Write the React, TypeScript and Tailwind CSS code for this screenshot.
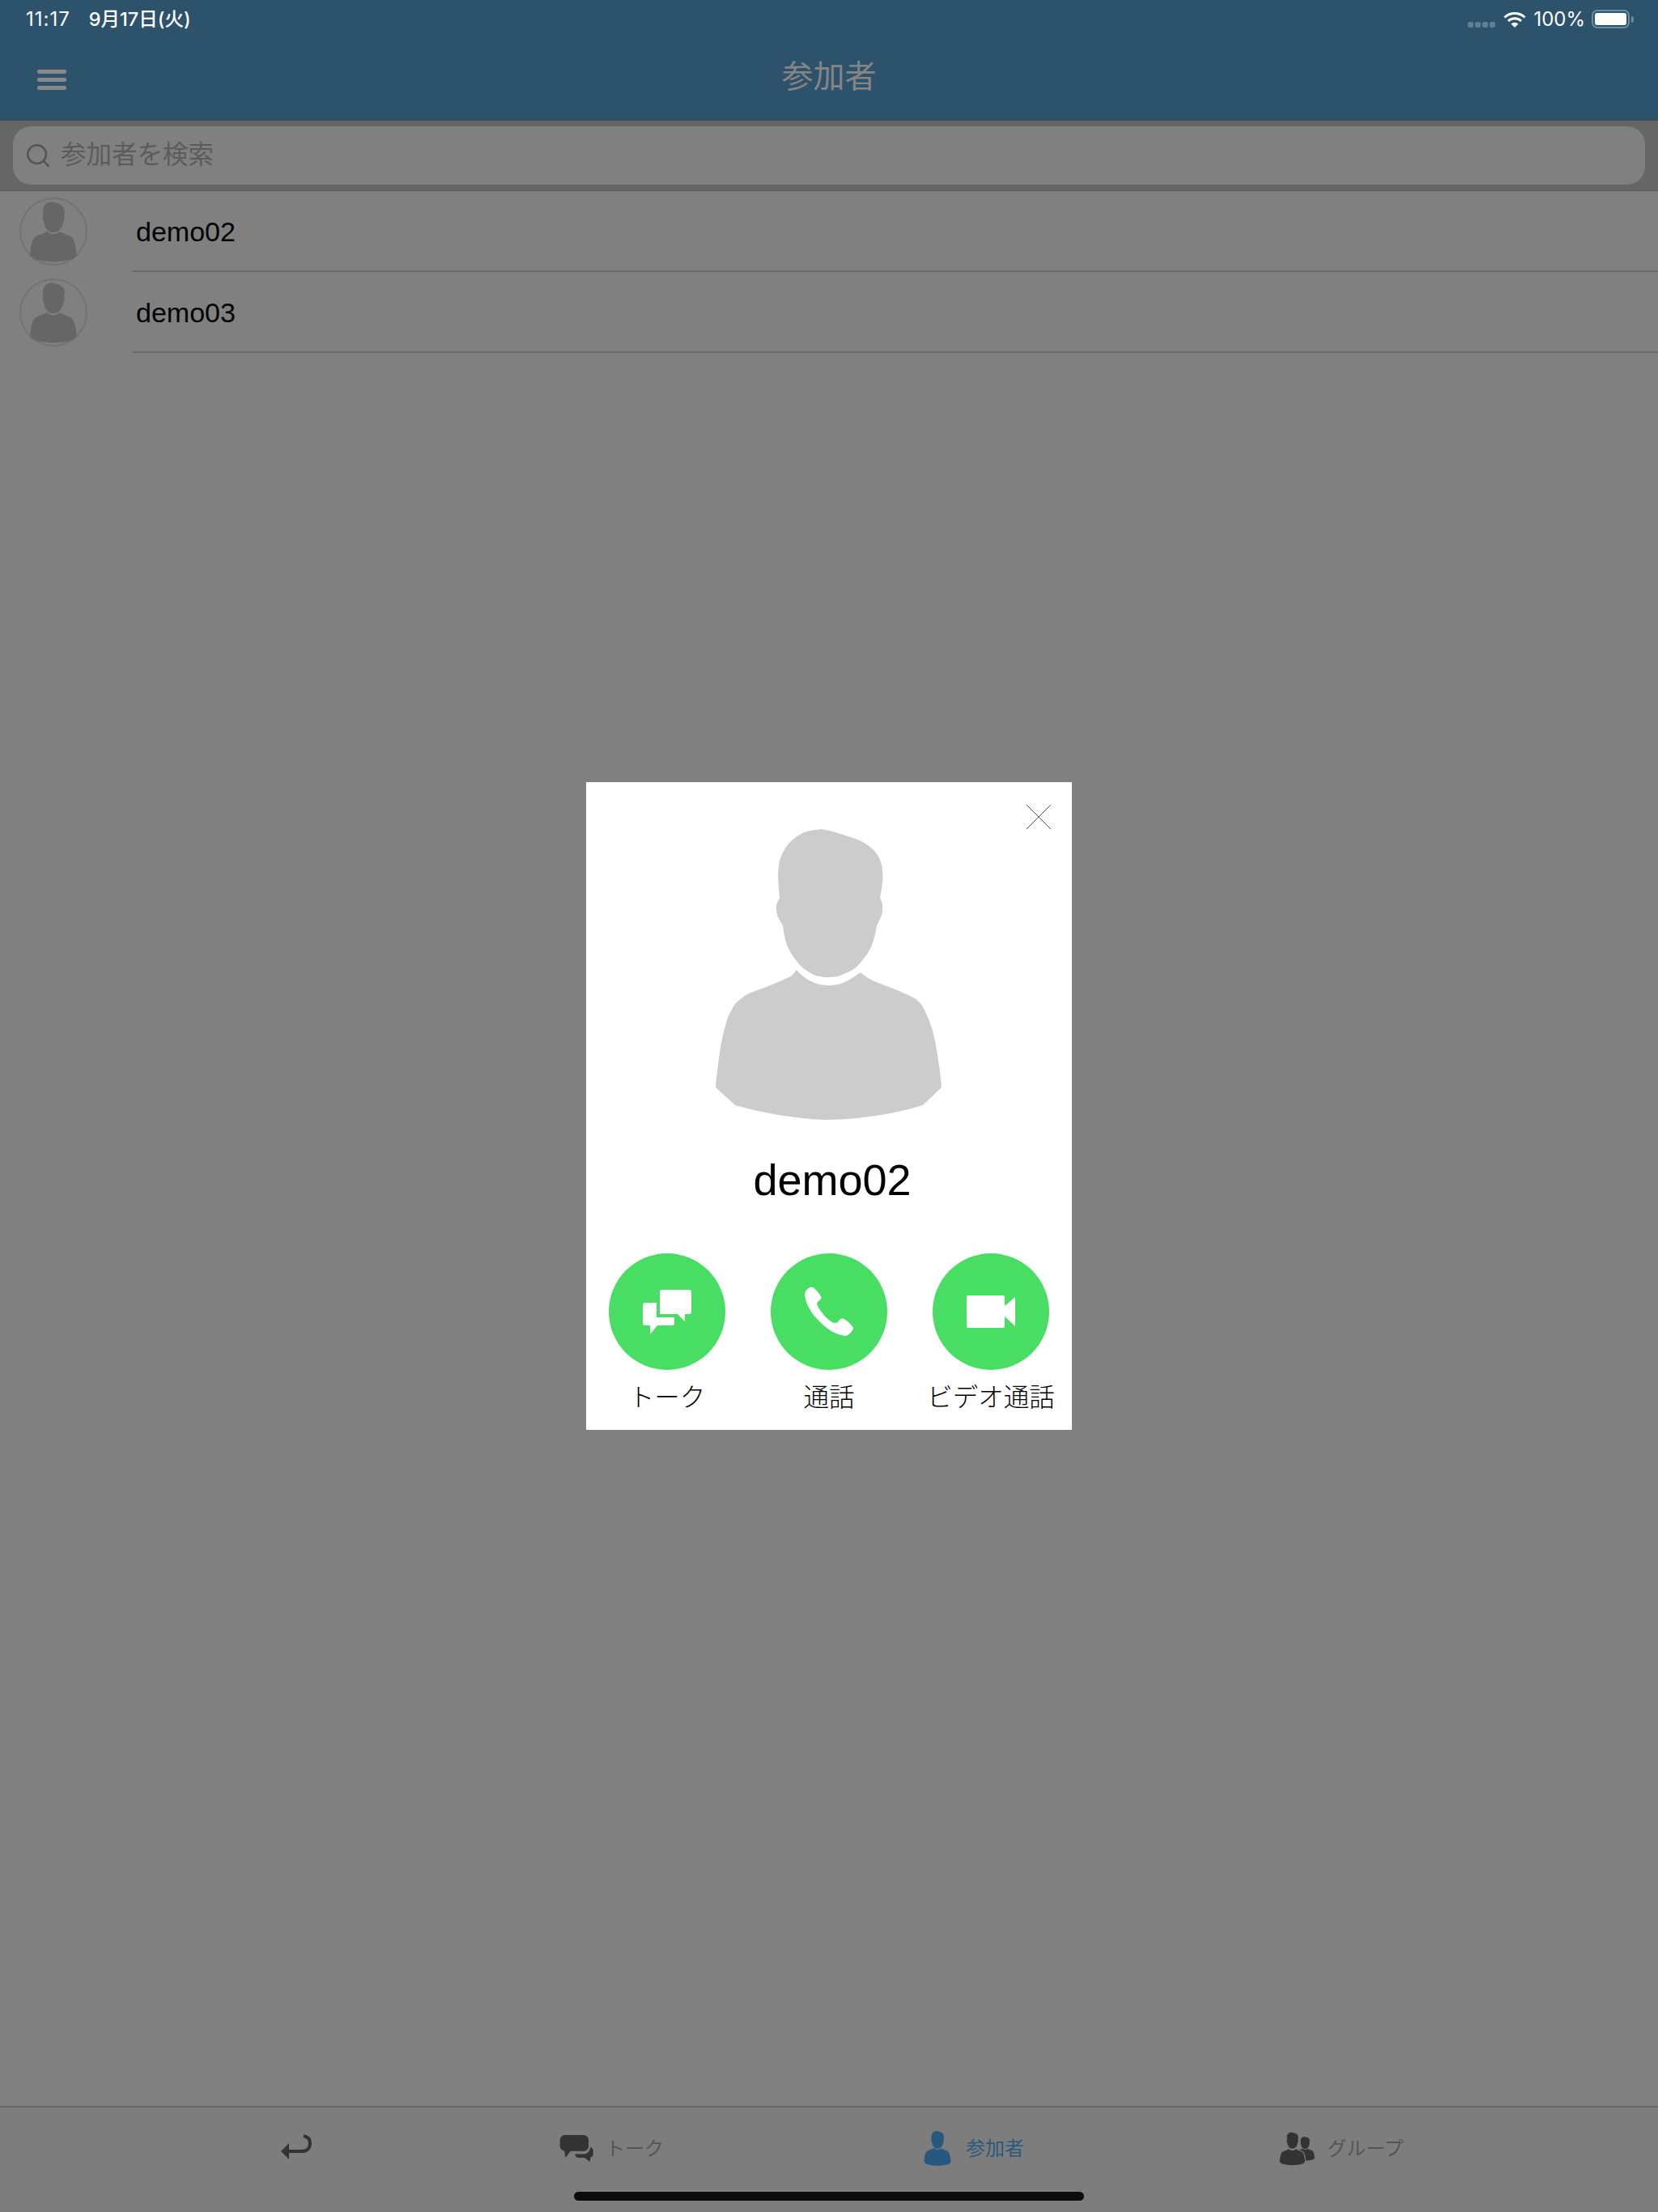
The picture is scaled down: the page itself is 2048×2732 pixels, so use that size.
import React from 'react';
import { Search } from 'lucide-react';

const FONT = "font-['Liberation_Sans','Noto_Sans_CJK_JP',sans-serif]";
const UI_FONT = "font-['Inter','Noto_Sans_CJK_JP',sans-serif]";

const PERSON_PATH =
    'M131 0 C145 2 157 7 170 11 C182 15 191 21 197 28 C203 36 206 44 206 53 C207 60 206 67 205 73 L203 86 C205 88 206 92 206 96 C206 101 206 105 204 109 L199 119 C198 127 196 135 193 143 C190 151 184 159 178 166 C172 173 166 176 158 179 C152 182 146 183 139 183 C132 183 125 182 119 179 C112 175 105 170 100 163 C95 157 91 150 88 143 C85 135 84 127 83 119 L77 109 C75 105 75 100 75 96 C75 92 77 88 79 86 L77 59 C77 52 78 45 79 39 C82 30 86 22 92 16 C99 9 107 4 116 2 Z M100 174 C106 181 113 186 120 189 C126 192 132 193 139 193 C146 193 153 192 159 189 C166 186 173 181 179 177 C186 183 193 187 201 190 C215 195 230 201 244 208 C248 210 252 214 255 218 C260 227 264 236 267 246 C271 259 273 272 275 286 C277 297 278 308 279 319 L256 341 C240 346 222 350 205 353 C183 356 161 359 139 359 C118 359 97 356 77 353 C59 350 41 346 24 341 L0 319 C1 305 3 290 5 276 C7 262 10 249 14 236 C16 229 20 222 24 216 C29 211 35 206 41 203 C55 198 70 192 84 186 C88 184 91 183 94 181 Z';

const Person: React.FC<{ className: string }> = ({ className }) => (
    <svg viewBox="0 0 280 360" className={className}>
        <path d={PERSON_PATH} fill="currentColor" />
    </svg>
);

const WifiIcon = () => (
    <svg viewBox="0 0 28 20" className="w-[28px] h-[20px] text-white">
        <path d="M1.5 7.5 A18 18 0 0 1 26.5 7.5" fill="none" stroke="currentColor" strokeWidth="3" />
        <path d="M6 12 A11.5 11.5 0 0 1 22 12" fill="none" stroke="currentColor" strokeWidth="3" />
        <path d="M14 20 L9.5 15.5 A6.5 6.5 0 0 1 18.5 15.5 Z" fill="currentColor" />
    </svg>
);

const StatusBar = () => (
    <div className={`h-[48px] pl-[32px] pr-[30px] flex items-start pt-[10px] justify-between text-white text-[24px] leading-[28px] ${UI_FONT}`}>
        <div className="flex gap-[23px]">
            <span className="tracking-[1px]">11:17</span>
            <span className="font-medium text-[23.5px]">9月17日(火)</span>
        </div>
        <div className="flex items-start">
            <div className="flex gap-[2px] mt-[17px] mr-[10px]">
                {[0, 1, 2, 3].map((i) => (
                    <div key={i} className="w-[7px] h-[7px] rounded-[2px] bg-[#5f7f95]" />
                ))}
            </div>
            <div className="mt-[4px] mr-[9px]">
                <WifiIcon />
            </div>
            <span className="mr-[8px]">100%</span>
            <div className="flex items-center mt-[2px]">
                <div className="w-[47px] h-[23px] rounded-[7px] border-2 border-[#6f8b9f] p-[2px]">
                    <div className="w-full h-full rounded-[3px] bg-white" />
                </div>
                <div className="w-[3px] h-[8px] ml-[2px] rounded-r-[3px] bg-[#6f8b9f]" />
            </div>
        </div>
    </div>
);

const Header = () => (
    <header className="bg-[#2d526c] border-b border-[#444444] h-[149px]">
        <StatusBar />
        <div className="h-[100px] pl-[46px] pr-[46px] pb-[6px] flex items-center">
            <div className="w-[36px] mt-[6px] flex flex-col gap-[5px]">
                <div className="h-[5px] rounded-[2px] bg-[#888888]" />
                <div className="h-[5px] rounded-[2px] bg-[#888888]" />
                <div className="h-[5px] rounded-[2px] bg-[#888888]" />
            </div>
            <div className={`flex-1 text-center pr-[36px] text-[39px] text-[#858585] ${FONT}`}>参加者</div>
        </div>
    </header>
);

const SearchBar = () => (
    <div className="h-[87px] bg-[#666666] border-b border-[#585858] px-[16px] pt-[7px]">
        <div className="h-[72px] rounded-[22px] bg-[#808080] flex items-center pl-[14px] gap-[11px]">
            <Search className="w-[34px] h-[34px] text-[#555555]" strokeWidth={1.75} />
            <span className={`text-[31.5px] text-[#5c5c5c] ${FONT}`}>参加者を検索</span>
        </div>
    </div>
);

const Row: React.FC<{ name: string }> = ({ name }) => (
    <div className="h-[100px] flex items-center pl-[24px]">
        <div className="w-[84px] h-[84px] rounded-full border-2 border-[#737373] flex items-center justify-center shrink-0">
            <Person className="w-[58px] h-[75px] text-[#666666]" />
        </div>
        <div className={`ml-[56px] pl-[4px] pt-[2px] flex-1 h-full flex items-center border-b-2 border-[#6b6b6b] text-black text-[34px] ${FONT}`}>
            {name}
        </div>
    </div>
);

const ReturnIcon = () => (
    <svg viewBox="0 0 41 33" className="w-[41px] h-[33px] text-[#333333]">
        <path d="M1 21 L11 11 V31 Z" fill="currentColor" />
        <path d="M10 21 H27 C33 21 37 17 37 11 C37 6 34 3 29 2" fill="none" stroke="currentColor" strokeWidth="4" />
    </svg>
);

const TalkIcon = () => (
    <svg viewBox="36 30 130 110" className="w-[43px] h-[37px] text-[#333333]">
        <path d="M58 35 H125 C137 35 145 43 145 55 V75 C145 87 137 95 125 95 H78 L58 120 L55 95 C45 93 38 85 38 75 V55 C38 43 46 35 58 35 Z" fill="currentColor" />
        <path d="M94 106 H128 C142 104 150 95 152 80 C158 82 162 87 162 94 V106 C162 113 158 117 152 118 L150 135 L130 120 H108 C100 120 95 114 94 106 Z" fill="currentColor" />
    </svg>
);

const GroupIcon = () => (
    <svg viewBox="0 0 45 42" className="w-[45px] h-[42px] text-[#333333]">
        <g transform="translate(20 6) scale(0.0857 0.083)">
            <path d={PERSON_PATH} fill="currentColor" />
        </g>
        <g transform="translate(0 0) scale(0.117 0.1167)">
            <path d={PERSON_PATH} fill="currentColor" stroke="#7d7d7d" strokeWidth="10" />
        </g>
    </svg>
);

const Tab: React.FC<{ icon: React.ReactNode; label: string; className: string; color: string }> = ({ icon, label, className, color }) => (
    <div className={`w-[450px] pt-[2px] flex items-center justify-center ${className}`}>
        {icon}
        <span className={`text-[24px] ${color} ${FONT}`}>{label}</span>
    </div>
);

const TabBar = () => (
    <footer className="relative h-[131px] bg-[#7d7d7d] border-t-2 border-[#666666] pl-[202px] pb-[30px] flex items-center">
        <div className="w-[328px] flex justify-center">
            <ReturnIcon />
        </div>
        <Tab icon={<TalkIcon />} label="トーク" className="gap-[14px] pl-[1px]" color="text-[#555555]" />
        <Tab icon={<Person className="w-[34px] h-[43px] text-[#26597d]" />} label="参加者" className="gap-[18px] pr-[4px]" color="text-[#2a5a7c]" />
        <Tab icon={<GroupIcon />} label="グループ" className="gap-[14px] pl-[4px]" color="text-[#555555]" />
        {/* home indicator */}
        <div className="absolute left-[709px] top-[104px] w-[630px] h-[11px] rounded-full bg-[#0c0c0c]" />
    </footer>
);

const ChatGlyph = () => (
    <svg viewBox="0 0 144 144" className="w-[144px] h-[144px] text-white">
        <path d="M66 45 H99 A3 3 0 0 1 102 48 V72 A3 3 0 0 1 99 75 H94 V84 L85 75 H63 V48 A3 3 0 0 1 66 45 Z" fill="currentColor" />
        <path d="M45 61 H59 V79 H81 V86 A3 3 0 0 1 78 89 H60 L51 100 V89 H45 A3 3 0 0 1 42 86 V64 A3 3 0 0 1 45 61 Z" fill="currentColor" />
    </svg>
);

const PhoneGlyph = () => (
    <svg viewBox="0 0 240 210" className="ml-[2px] w-[80px] h-[70px] text-white">
        <path
            d="M45 15 C52 13 58 14 62 18 C72 28 82 38 88 50 C89 54 88 57 85 60 C80 65 74 68 72 75 C73 80 75 85 78 90 C85 101 92 111 100 120 C109 129 119 138 130 145 C136 148 143 148 148 145 C152 141 155 135 160 132 C164 130 168 130 172 132 C183 138 193 146 200 155 C204 159 207 163 207 168 C204 176 197 184 190 190 C185 194 180 196 175 195 C159 192 144 187 130 180 C114 170 99 158 85 145 C70 130 56 113 45 95 C37 81 31 66 28 50 C27 43 27 36 30 30 C34 24 39 19 45 15 Z"
            fill="currentColor"
        />
    </svg>
);

const VideoGlyph = () => (
    <svg viewBox="0 0 144 144" className="w-[144px] h-[144px] text-white">
        <rect x="42" y="52" width="47" height="40" rx="2" fill="currentColor" />
        <path d="M89 65 L102 54 V90 L89 78 Z" fill="currentColor" />
    </svg>
);

const Action: React.FC<{ label: string; children: React.ReactNode }> = ({ label, children }) => (
    <div className="flex flex-col items-center">
        <div className="w-[144px] h-[144px] rounded-full bg-[#48dd63] flex items-center justify-center">{children}</div>
        <div className={`mt-[14px] h-[40px] leading-[40px] text-[31.5px] text-black whitespace-nowrap font-light ${FONT}`}>{label}</div>
    </div>
);

const ProfileDialog = () => (
    <div className="absolute inset-0 flex items-center justify-center">
        <div className="relative w-[600px] h-[800px] bg-white flex flex-col items-center pt-[58px]">
            <svg viewBox="0 0 30 30" className="absolute top-[28px] right-[26px] w-[30px] h-[30px] text-[#555555]">
                <path d="M0 0 L30 30 M30 0 L0 30" stroke="currentColor" strokeWidth="1" fill="none" />
            </svg>
            <Person className="w-[280px] h-[360px] text-[#cccccc]" />
            <div className={`mt-[43px] pl-[8px] h-[60px] leading-[60px] text-[54px] text-black ${FONT}`}>demo02</div>
            <div className="mt-[61px] w-full grid grid-cols-3">
                <Action label="トーク"><ChatGlyph /></Action>
                <Action label="通話"><PhoneGlyph /></Action>
                <Action label="ビデオ通話"><VideoGlyph /></Action>
            </div>
        </div>
    </div>
);

const App: React.FC = () => (
    <div className="relative w-[2048px] h-[2732px] bg-[#808080] flex flex-col overflow-hidden">
        <Header />
        <SearchBar />
        <main className="flex-1">
            <Row name="demo02" />
            <Row name="demo03" />
        </main>
        <TabBar />
        <ProfileDialog />
    </div>
);

export default App;
